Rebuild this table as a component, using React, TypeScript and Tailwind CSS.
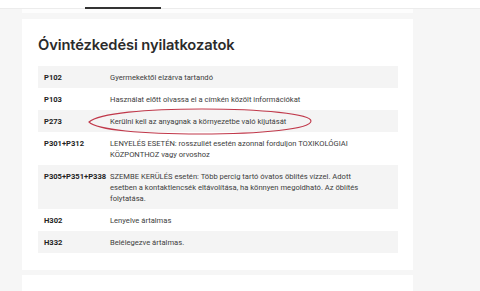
import React from 'react';

const rows: { code: string; text: string }[] = [
  { code: 'P102', text: 'Gyermekektől elzárva tartandó' },
  { code: 'P103', text: 'Használat előtt olvassa el a címkén közölt információkat' },
  { code: 'P273', text: 'Kerülni kell az anyagnak a környezetbe való kijutását' },
  {
    code: 'P301+P312',
    text: 'LENYELÉS ESETÉN: rosszullét esetén azonnal forduljon TOXIKOLÓGIAI KÖZPONTHOZ vagy orvoshoz',
  },
  {
    code: 'P305+P351+P338',
    text: 'SZEMBE KERÜLÉS esetén: Több percig tartó óvatos öblítés vízzel. Adott esetben a kontaktlencsék eltávolítása, ha könnyen megoldható. Az öblítés folytatása.',
  },
  { code: 'H302', text: 'Lenyelve ártalmas' },
  { code: 'H332', text: 'Belélegezve ártalmas.' },
];

export default function App() {
  return (
    <div className="h-[291px] w-[480px] overflow-hidden bg-[#f6f6f6] font-['Roboto',sans-serif]">
      {/* top tab strip */}
      <div className="relative h-[9px] border-b border-[#ececec] bg-white">
        <div className="absolute left-[85px] top-[7px] h-[2px] w-[76px] bg-[#333]" />
      </div>

      <div className="flex">
        <div className="ml-[22px] w-[391px]">
          <div className="h-[4px] bg-[#fdfdfd]" />

          <section className="mt-[6px] bg-white px-4 pb-[17px] pt-[15px]">
            <h2 className="font-['Inter',sans-serif] text-[14.7px] font-semibold leading-[22px] tracking-[-0.1px] text-[#2b2b2b]">
              Óvintézkedési nyilatkozatok
            </h2>

            <div className="relative mt-[10px] w-[360px]">
              <table className="w-full border-collapse text-[7.6px] leading-[11px]">
                <tbody>
                  {rows.map((r, i) => (
                    <tr key={r.code} className={i % 2 === 0 ? 'bg-[#f4f4f4]' : 'bg-white'}>
                      <td className="w-[72px] py-[5.5px] pl-[6px] align-top font-bold text-[#222]">{r.code}</td>
                      <td className="py-[5.5px] pr-[32px] align-top text-[#3d3d3d]">{r.text}</td>
                    </tr>
                  ))}
                </tbody>
              </table>

              {/* red hand-drawn ring round P273 */}
              <svg
                className="pointer-events-none absolute left-[49px] top-[41px]"
                width="226"
                height="29"
                viewBox="0 0 226 29"
              >
                <path
                  d="M2 15 C 12 6, 60 2, 115 2 C 175 2, 224 7, 224 14 C 224 22, 175 27, 113 27 C 55 27, 10 23, 2 15 Z"
                  fill="none"
                  stroke="#c0384a"
                  strokeWidth="1.1"
                />
              </svg>
            </div>
          </section>

          <div className="mt-[5px] h-[20px] bg-white" />
        </div>
      </div>
    </div>
  );
}
